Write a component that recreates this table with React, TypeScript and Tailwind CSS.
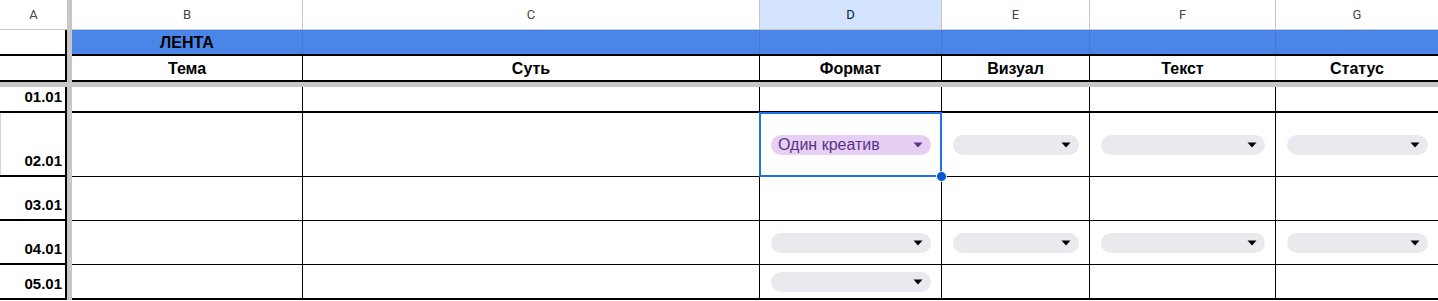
import React from "react";

const ff = { fontFamily: '"Liberation Sans", Arial, sans-serif' };

function Tri({ color }: { color: string }) {
  return (
    <svg width="10" height="6" viewBox="0 0 10 6" className="shrink-0">
      <path d="M0.5 0.5 H9.5 L5 5.5 Z" fill={color} />
    </svg>
  );
}

function Chip({ label }: { label?: string }) {
  if (label) {
    return (
      <div className="flex h-[20px] w-full items-center justify-between rounded-full bg-[#e6cff2] pl-[7px] pr-[8px]">
        <span className="text-[16px] leading-none text-[#5a3286]">{label}</span>
        <Tri color="#5a3286" />
      </div>
    );
  }
  return (
    <div className="flex h-[20px] w-full items-center justify-end rounded-full bg-[#e8eaed] pr-[8px]">
      <Tri color="#000000" />
    </div>
  );
}

const W = {
  A: "w-[67px]",
  gap: "w-[5px]",
  B: "w-[231px]",
  C: "w-[457px]",
  D: "w-[182px]",
  E: "w-[148px]",
  F: "w-[186px]",
  G: "flex-1",
};

type RowDef = {
  label: string;
  h: string;
  thick: boolean;
  chips: (string | null | undefined)[];
  sel?: boolean;
};

const rows: RowDef[] = [
  { label: "01.01", h: "h-[26px]", thick: true, chips: [undefined, undefined, undefined, undefined] },
  { label: "02.01", h: "h-[64px]", thick: false, chips: ["Один креатив", null, null, null], sel: true },
  { label: "03.01", h: "h-[44px]", thick: false, chips: [undefined, undefined, undefined, undefined] },
  { label: "04.01", h: "h-[44px]", thick: false, chips: [null, null, null, null] },
  { label: "05.01", h: "h-[35px]", thick: true, chips: [null, undefined, undefined, undefined] },
];

export default function App() {
  const dataCols = [W.D, W.E, W.F, W.G];
  return (
    <div className="relative h-[301px] w-[1438px] overflow-hidden bg-white" style={ff}>
      {/* column letters */}
      <div className="flex h-[30px] border-b border-[#c4c7c5]" style={{ fontFamily: "Roboto, Arial, sans-serif" }}>
        <div className={`${W.A} flex items-center justify-center text-[13px] text-[#444746]`}>A</div>
        <div className={`${W.gap} bg-[#c7c7c7]`} />
        <div className={`${W.B} flex items-center justify-center border-r border-[#c4c7c5] text-[13px] text-[#444746]`}>B</div>
        <div className={`${W.C} flex items-center justify-center border-r border-[#c4c7c5] text-[13px] text-[#444746]`}>C</div>
        <div className={`${W.D} flex items-center justify-center border-r border-[#c4c7c5] bg-[#d3e3fd] text-[13px] text-[#041e49]`}>D</div>
        <div className={`${W.E} flex items-center justify-center border-r border-[#c4c7c5] text-[13px] text-[#444746]`}>E</div>
        <div className={`${W.F} flex items-center justify-center border-r border-[#c4c7c5] text-[13px] text-[#444746]`}>F</div>
        <div className={`${W.G} flex items-center justify-center text-[13px] text-[#444746]`}>G</div>
      </div>

      {/* ЛЕНТА row */}
      <div className="flex h-[26px]">
        <div className={`${W.A} border-r-2 border-b-2 border-black`} />
        <div className={`${W.gap} bg-[#c7c7c7]`} />
        <div className="flex flex-1 border-b-2 border-black bg-[#4a86e8]">
          <div className={`${W.B} flex items-center justify-center border-r border-[#4279d6] pt-[1px] text-[16px] font-bold text-black`}>ЛЕНТА</div>
          <div className={`${W.C} border-r border-[#4279d6]`} />
          <div className={`${W.D} border-r border-[#4279d6]`} />
          <div className={`${W.E} border-r border-[#4279d6]`} />
          <div className={`${W.F} border-r border-[#4279d6]`} />
          <div className={W.G} />
        </div>
      </div>

      {/* header row */}
      <div className="flex h-[26px]">
        <div className={`${W.A} border-r-2 border-b-2 border-black`} />
        <div className={`${W.gap} bg-[#c7c7c7]`} />
        <div className="flex flex-1 border-b-2 border-black">
          {[
            ["Тема", W.B, true],
            ["Суть", W.C, true],
            ["Формат", W.D, true],
            ["Визуал", W.E, true],
            ["Текст", W.F, false],
            ["Статус", W.G, false],
          ].map(([t, w, b]) => (
            <div
              key={t as string}
              className={`${w} flex items-center justify-center pt-[1px] text-[16px] font-bold text-black ${
                b ? "border-r border-black" : t === "Текст" ? "border-r border-[#d9d9d9]" : ""
              }`}
            >
              {t as string}
            </div>
          ))}
        </div>
      </div>

      {/* horizontal freeze bar */}
      <div className="h-[5px] bg-[#c7c7c7]" />

      {/* data rows */}
      {rows.map((r) => (
        <div key={r.label} className={`flex ${r.h}`}>
          <div
            className={`${W.A} flex items-end justify-end border-r-2 border-b-2 border-black pb-[3px] pr-[3px] text-[15px] font-bold text-black ${
              r.sel ? "shadow-[inset_1px_0_0_#c2d7f5]" : ""
            }`}
          >
            {r.label}
          </div>
          <div className={`${W.gap} bg-[#c7c7c7]`} />
          <div className={`flex flex-1 border-black ${r.thick ? "border-b-2" : "border-b"}`}>
            <div className={`${W.B} border-r border-black`} />
            <div className={`${W.C} border-r border-black`} />
            {dataCols.map((w, i) => {
              const c = r.chips[i];
              return (
                <div
                  key={i}
                  className={`${w} flex items-center pl-[11px] pr-[10px] ${i < 3 ? "border-r border-black" : ""}`}
                >
                  {c !== undefined && <Chip label={c ?? undefined} />}
                </div>
              );
            })}
          </div>
        </div>
      ))}

      {/* selection box over D 02.01 */}
      <div className="pointer-events-none absolute left-[759px] top-[112px] h-[65px] w-[183px] border-2 border-[#1a73e8]" />
      <div className="pointer-events-none absolute left-[936px] top-[171px] h-[11px] w-[11px] rounded-full border border-white bg-[#0b57d0]" />
    </div>
  );
}
